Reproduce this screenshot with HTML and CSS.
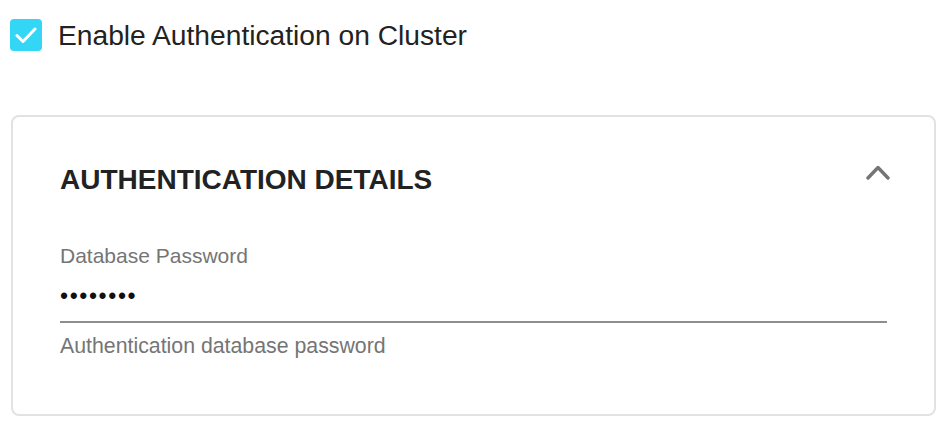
FILE: index.html
```html
<!DOCTYPE html>
<html>
<head>
<meta charset="utf-8">
<link rel="stylesheet" href="styles.css">
</head>
<body>
<div class="page">
  <label class="check-row">
    <span class="checkbox">
      <svg width="22" height="18" viewBox="0 0 22 18"><path d="M2 9.5 L8 15.5 L20 3" fill="none" stroke="#fff" stroke-width="3" stroke-linecap="round" stroke-linejoin="round"/></svg>
    </span>
    <span class="check-label">Enable Authentication on Cluster</span>
  </label>
  <section class="card">
    <div class="card-head">
      <h2 class="card-title">AUTHENTICATION DETAILS</h2>
      <svg class="chevron" width="24" height="17" viewBox="0 0 24 17"><path d="M2 14 L12 3.5 L22 14" fill="none" stroke="#757575" stroke-width="3.4" stroke-linecap="round" stroke-linejoin="round"/></svg>
    </div>
    <div class="field">
      <div class="field-label">Database Password</div>
      <div class="field-input">••••••••</div>
      <div class="field-help">Authentication database password</div>
    </div>
  </section>
</div>
</body>
</html>
```
FILE: styles.css
```css
html, body { margin: 0; padding: 0; background: #fff; }
body { font-family: "Liberation Sans", Arial, sans-serif; }
.page { padding: 19px 10px 0 10px; width: 926px; }
.check-row { display: flex; align-items: center; gap: 16px; height: 32px; }
.checkbox { width: 32px; height: 32px; border-radius: 4px; background: #33d6f5; display: flex; align-items: center; justify-content: center; flex: none; }
.check-label { font-size: 28.2px; color: #222; }
.card { margin-top: 64px; margin-left: 1px; border: 2px solid #e2e2e2; border-radius: 8px; height: 301px; box-sizing: border-box; padding: 0 47px 0 47px; }
.card-head { display: flex; justify-content: space-between; align-items: flex-start; padding-top: 47px; }
.card-title { margin: 0; font-size: 28px; font-weight: bold; color: #222; line-height: 32px; }
.chevron { margin-top: 0; margin-right: -3px; }
.field { margin-top: 48px; }
.field-label { font-size: 21px; color: #757575; line-height: 24px; }
.field-input { font-size: 23px; letter-spacing: 1.6px; color: #111; line-height: 30px; margin-top: 13px; padding-bottom: 10px; border-bottom: 2px solid #8e8e8e; }
.field-help { font-size: 21.3px; color: #757575; line-height: 24px; margin-top: 11px; }
```
